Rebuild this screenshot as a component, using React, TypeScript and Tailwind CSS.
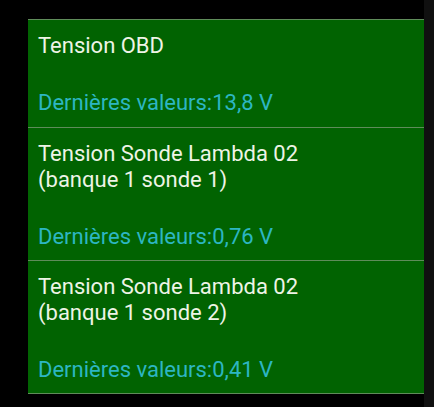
import React from "react";

type Item = { title: string[]; value: string };

const items: Item[] = [
  { title: ["Tension OBD"], value: "13,8 V" },
  { title: ["Tension Sonde Lambda 02", "(banque 1 sonde 1)"], value: "0,76 V" },
  { title: ["Tension Sonde Lambda 02", "(banque 1 sonde 2)"], value: "0,41 V" },
];

export default function App() {
  return (
    <div
      className="w-[434px] h-[407px] bg-black flex overflow-hidden"
      style={{ fontFamily: "Roboto, 'Noto Sans', sans-serif" }}
    >
      <div className="pl-[28px] pt-[19px]">
        <ul className="w-[396px] bg-[#016301] border-b border-[#5f8c5a]">
          {items.map((it, i) => (
            <li
              key={i}
              className={
                "border-t border-[#5f8c5a] pl-[10px] pr-2 pt-[13px] flex flex-col gap-[31px] text-[22px] leading-[25px] " +
                (it.title.length > 1 ? "pb-[11px]" : "pb-[12px]")
              }
            >
              <div className="text-[#eef4e6] leading-[26px]">
                {it.title.map((t, j) => (
                  <div key={j}>{t}</div>
                ))}
              </div>
              <div className="text-[#2db6c2]">Dernières valeurs:{it.value}</div>
            </li>
          ))}
        </ul>
      </div>
      <div className="ml-auto w-[10px] h-full bg-[#101010]" />
    </div>
  );
}
